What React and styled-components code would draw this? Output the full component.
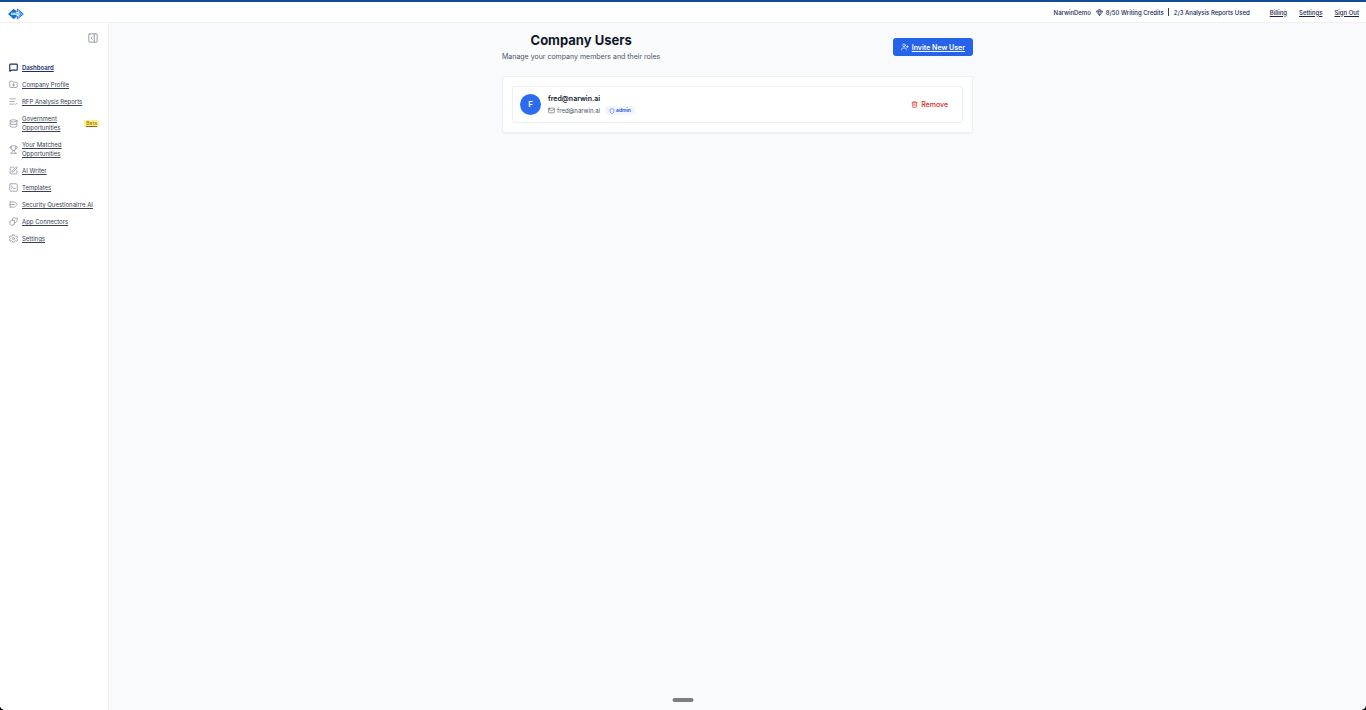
import React from 'react';
import styled, { createGlobalStyle } from 'styled-components';
import { MessageSquare, FolderPlus, Database, Trophy, SquarePen, Gem, UserPlus, Mail, Trash2, Shield } from 'lucide-react';

const GlobalStyle = createGlobalStyle`
  *, *::before, *::after { box-sizing: border-box; }
  body {
    margin: 0;
    background: #000;
    font-family: Inter, "Liberation Sans", sans-serif;
    font-size: 6px;
    line-height: 9px;
    color: #1e293b;
  }
  h1, h2, p, ul { margin: 0; padding: 0; }
  svg { display: block; flex: none; }
  button { font: inherit; cursor: pointer; }
`;

const Shell = styled.div`
  position: relative;
  min-height: 100vh;
  display: flex;
  flex-direction: column;
  background: #f8fafc;
  border-top: 2px solid #124b94;
  border-radius: 0 0 5px 5px;
  overflow: hidden;
`;

const TopBar = styled.header`
  height: 21px;
  display: flex;
  align-items: center;
  justify-content: space-between;
  padding: 0 7px 0 8px;
  background: #fff;
  border-bottom: 1px solid #eff1f5;
`;

const LogoLink = styled.a`
  display: block;
  padding-top: 3px;
`;

const Account = styled.div`
  display: flex;
  align-items: center;
  font-weight: 500;
  color: #172554;
`;

const Credits = styled.span`
  display: flex;
  align-items: center;
  gap: 3px;
  margin-left: 5px;
`;

const Divider = styled.span`
  width: 1px;
  height: 8px;
  margin: 0 5px 0 4px;
  background: #334155;
`;

const TopLinks = styled.nav`
  display: flex;
  gap: 12px;
  margin-left: 20px;

  a { color: inherit; }
`;

const Body = styled.div`
  flex: 1;
  display: flex;
`;

const Sidebar = styled.aside`
  width: 109px;
  flex: none;
  background: #fff;
  border-right: 1px solid #eff1f5;
  padding: 10px 9px;
`;

const CollapseButton = styled.button`
  display: block;
  margin: 0 1px 16px auto;
  padding: 0;
  border: 0;
  background: none;
  color: #808795;
`;

const NavList = styled.ul`
  list-style: none;
`;

const NavLink = styled.a`
  display: flex;
  align-items: center;
  gap: 4px;
  padding: 4px 0;
  color: ${p => (p.$active ? '#172f6b' : '#374151')};
  font-weight: ${p => (p.$active ? 600 : 400)};

  svg {
    color: ${p => (p.$active ? '#172f6b' : '#8b929e')};
    stroke-width: ${p => (p.$active ? 3 : 2)};
  }
`;

const NavText = styled.span`
  flex: 1;
  white-space: pre-line;
`;

const Beta = styled.span`
  padding: 0 2px;
  font-size: 5px;
  line-height: 7px;
  border-radius: 2px;
  background: #fef08a;
  color: #a16207;
  text-decoration: underline;
`;

const Main = styled.main`
  flex: 1;
  min-width: 0;
`;

const Container = styled.div`
  max-width: 491px;
  margin: 0 auto;
  padding: 9px 10px;
`;

const PageHead = styled.div`
  display: flex;
  align-items: center;
  justify-content: space-between;
  margin-bottom: 14px;
`;

const Heading = styled.div`
  text-align: center;
`;

const Title = styled.h1`
  font-size: 13px;
  line-height: 16px;
  font-weight: 700;
  color: #111827;
`;

const Subtitle = styled.p`
  margin-top: 4px;
  font-size: 7px;
  line-height: 10px;
  color: #4b5563;
`;

const InviteLink = styled.a`
  display: flex;
  align-items: center;
  gap: 3px;
  height: 18px;
  padding: 0 8px;
  border-radius: 3px;
  background: #2563eb;
  color: #fff;
  font-size: 7px;
  font-weight: 600;
`;

const Card = styled.section`
  padding: 9px;
  background: #fff;
  border: 1px solid #eceff3;
  border-radius: 3px;
  box-shadow: 0 1px 1px rgba(15, 23, 42, 0.04);
`;

const UserRow = styled.article`
  display: flex;
  align-items: center;
  gap: 7px;
  padding: 7px;
  border: 1px solid #eceff3;
  border-radius: 3px;
`;

const Avatar = styled.span`
  width: 21px;
  height: 21px;
  display: grid;
  place-items: center;
  border-radius: 50%;
  background: #2b6bed;
  color: #fff;
  font-size: 8px;
  font-weight: 600;
`;

const UserInfo = styled.div`
  flex: 1;
`;

const UserName = styled.h2`
  font-size: 7px;
  line-height: 10px;
  font-weight: 600;
  color: #111827;
`;

const UserMeta = styled.div`
  display: flex;
  align-items: center;
  gap: 5px;
  margin-top: 2px;
  color: #4b5563;
`;

const Email = styled.span`
  display: flex;
  align-items: center;
  gap: 2px;
`;

const Role = styled.span`
  display: flex;
  align-items: center;
  gap: 1px;
  padding: 0 4px;
  border-radius: 5px;
  background: #eff6ff;
  color: #1d4ed8;
  font-size: 5px;
  font-weight: 600;
`;

const RemoveButton = styled.button`
  display: flex;
  align-items: center;
  gap: 3px;
  padding: 4px 7px;
  border: 0;
  background: none;
  color: #dc2626;
  font-size: 7px;
  font-weight: 500;
`;

const HomeIndicator = styled.div`
  position: absolute;
  bottom: 8px;
  left: 50%;
  transform: translateX(-50%);
  width: 21px;
  height: 4px;
  border-radius: 2px;
  background: #7c7e80;
`;

const Outline = ({ size = 9, children }) => (
  <svg width={size} height={size} viewBox="0 0 24 24" fill="none" stroke="currentColor" strokeWidth="2" strokeLinecap="round" strokeLinejoin="round" aria-hidden="true">
    {children}
  </svg>
);

const Logo = () => (
  <svg width="16" height="12" viewBox="0 0 48 36" role="img" aria-label="Narwin">
    <path d="M17 2 L26 10 V14 H10 V21 H26 V26 L17 34 L0 18 Z" fill="#1672d8" />
    <path d="M10 15 H31 V5 L45 18 L31 31 V21 H10 Z" fill="#a9d5fa" />
    <path d="M28 12 V3 L46 18 L28 33 V24 M33 11 L40 18 L33 25" fill="none" stroke="#1672d8" strokeWidth="3" />
  </svg>
);

const PanelIcon = () => (
  <Outline size={10}>
    <rect x="2" y="2" width="20" height="20" rx="2" />
    <path d="M15 2v20M10 9l-3 3 3 3" />
  </Outline>
);
const ReportIcon = () => (
  <Outline><path d="M2 5h15M2 12h12M2 19h10M16 18l2 2 4-4" /></Outline>
);
const TemplateIcon = () => (
  <Outline><rect x="2" y="2" width="20" height="20" rx="3" /><path d="M6 8l4 3-4 3M12 15h5" /></Outline>
);
const SecurityIcon = () => (
  <Outline><path d="M3 5h12l7 7-7 7H3M3 12h11M3 5v14" /></Outline>
);
const ConnectorIcon = () => (
  <Outline><path d="M9 9V4l4-2 9 1-1 9-3 3h-4M9 9l-6 2-1 8 3 3 8-1 2-6-1-5z" /></Outline>
);
const GearIcon = () => (
  <Outline><path d="M10 2h4l1 3 3 1 3-1 2 4-2 3 2 3-2 4-3-1-3 1-1 3h-4l-1-3-3-1-3 1-2-4 2-3-2-3 2-4 3 1 3-1z" /><circle cx="12" cy="12" r="3" /></Outline>
);

const NAV = [
  { label: 'Dashboard', Icon: MessageSquare, active: true },
  { label: 'Company Profile', Icon: FolderPlus },
  { label: 'RFP Analysis Reports', Icon: ReportIcon },
  { label: 'Government\nOpportunities', Icon: Database, beta: true },
  { label: 'Your Matched\nOpportunities', Icon: Trophy },
  { label: 'AI Writer', Icon: SquarePen },
  { label: 'Templates', Icon: TemplateIcon },
  { label: 'Security Questionairre AI', Icon: SecurityIcon },
  { label: 'App Connectors', Icon: ConnectorIcon },
  { label: 'Settings', Icon: GearIcon },
];

export default function App() {
  return (
    <>
      <GlobalStyle />
      <Shell>
        <TopBar>
          <LogoLink href="#home"><Logo /></LogoLink>
          <Account>
            <span>NarwinDemo</span>
            <Credits><Gem size={7} />8/50 Writing Credits</Credits>
            <Divider />
            <span>2/3 Analysis Reports Used</span>
            <TopLinks>
              <a href="#billing">Billing</a>
              <a href="#settings">Settings</a>
              <a href="#signout">Sign Out</a>
            </TopLinks>
          </Account>
        </TopBar>
        <Body>
          <Sidebar>
            <CollapseButton type="button" aria-label="Collapse sidebar"><PanelIcon /></CollapseButton>
            <nav>
              <NavList>
                {NAV.map(({ label, Icon, active, beta }) => (
                  <li key={label}>
                    <NavLink href="#nav" $active={active}>
                      <Icon size={9} />
                      <NavText>{label}</NavText>
                      {beta && <Beta>Beta</Beta>}
                    </NavLink>
                  </li>
                ))}
              </NavList>
            </nav>
          </Sidebar>
          <Main>
            <Container>
              <PageHead>
                <Heading>
                  <Title>Company Users</Title>
                  <Subtitle>Manage your company members and their roles</Subtitle>
                </Heading>
                <InviteLink href="#invite"><UserPlus size={8} />Invite New User</InviteLink>
              </PageHead>
              <Card>
                <UserRow>
                  <Avatar>F</Avatar>
                  <UserInfo>
                    <UserName>fred@narwin.ai</UserName>
                    <UserMeta>
                      <Email><Mail size={7} />fred@narwin.ai</Email>
                      <Role><Shield size={6} />admin</Role>
                    </UserMeta>
                  </UserInfo>
                  <RemoveButton type="button"><Trash2 size={7} />Remove</RemoveButton>
                </UserRow>
              </Card>
            </Container>
          </Main>
        </Body>
        <HomeIndicator />
      </Shell>
    </>
  );
}
